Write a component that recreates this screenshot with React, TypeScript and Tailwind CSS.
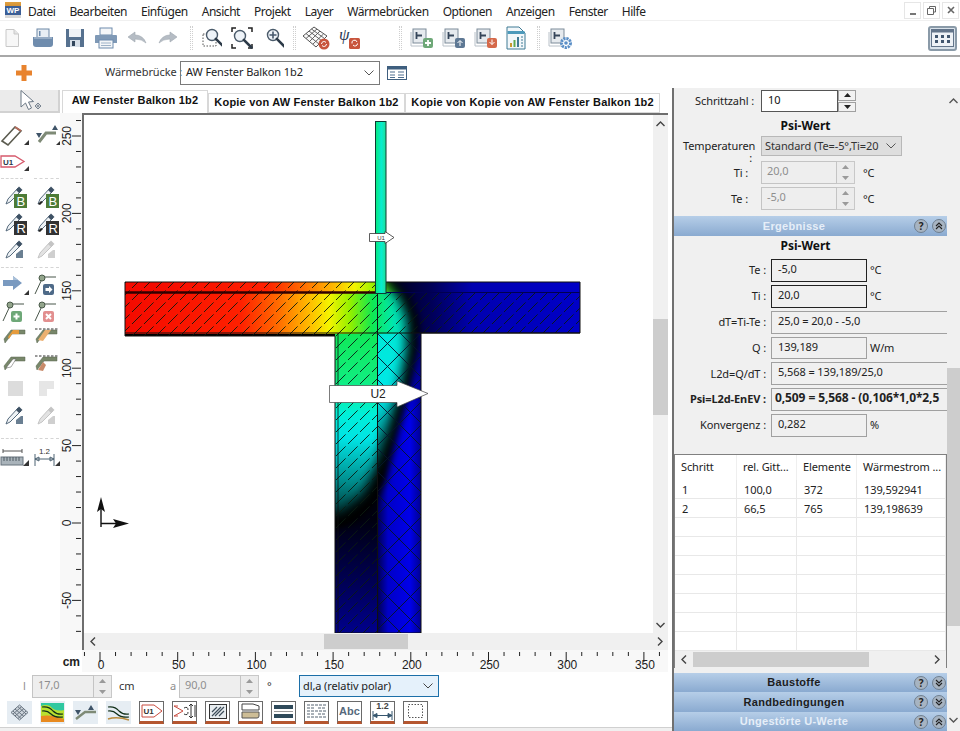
import React from "react";

const SF = "'Liberation Sans', sans-serif";

function Ic({ w = 24, h = 24, vb, className = "", children }: { w?: number; h?: number; vb?: string; className?: string; children?: React.ReactNode }) {
  return (
    <svg width={w} height={h} viewBox={vb ?? `0 0 ${w} ${h}`} className={`shrink-0 block ${className}`}>
      {children}
    </svg>
  );
}

const Corner = () => <path d="M24 23 L29 18 V23 Z" fill="#333" />;

/* ---------- top toolbar ---------- */
const IconNew = () => (
  <Ic w={16} h={20}>
    <path d="M2 1.5 H10 L14.5 6 V18.5 H2 Z" fill="#f7f7f7" stroke="#c8c8c8" />
    <path d="M10 1.5 V6 H14.5" fill="#e4e4e4" stroke="#c8c8c8" />
  </Ic>
);
const IconOpen = () => (
  <Ic w={22} h={20}>
    <rect x="5" y="1" width="12" height="9" fill="#e8eef4" stroke="#6d87a6" />
    <path d="M1 9 H21 V16 Q21 19 18 19 H4 Q1 19 1 16 Z" fill="#6f8cad" />
    <rect x="7" y="3" width="1.5" height="5" fill="#6f8cad" />
    <rect x="2" y="9" width="18" height="2" fill="#95abc4" />
  </Ic>
);
const IconSave = () => (
  <Ic w={20} h={20}>
    <path d="M1 1 H19 V19 H1 Z" fill="#56718f" />
    <rect x="4" y="1" width="12" height="8" fill="#eef2f6" />
    <rect x="5" y="12" width="10" height="7" fill="#d7dfe8" />
    <rect x="7" y="13" width="3" height="5" fill="#33465c" />
  </Ic>
);
const IconPrint = () => (
  <Ic w={24} h={22}>
    <rect x="6" y="1" width="12" height="7" fill="#f4f6f8" stroke="#6f8cad" />
    <path d="M2 8 H22 Q23 8 23 9 V16 H1 V9 Q1 8 2 8 Z" fill="#7f99b6" />
    <rect x="5" y="13" width="14" height="8" fill="#f4f6f8" stroke="#6f8cad" />
    <path d="M7 16 H17 M7 18.5 H17" stroke="#9eb2c7" />
  </Ic>
);
const IconUndo = ({ flip = false }: { flip?: boolean }) => (
  <Ic w={20} h={16} className={flip ? "-scale-x-100" : ""}>
    <path d="M1 7 L8 2 V5 Q16 5 19 13 Q15 9 8 9 V12 Z" fill="#b5bcc4" stroke="#9fa7b0" strokeWidth="0.6" />
  </Ic>
);
const Lens = ({ x = 9, y = 9, r = 6, plus = false }: { x?: number; y?: number; r?: number; plus?: boolean }) => (
  <g>
    <circle cx={x} cy={y} r={r} fill="#eef3f8" stroke="#4a5a6a" strokeWidth="1.4" />
    <path d={`M${x + r * 0.7} ${y + r * 0.7} L${x + r + 6} ${y + r + 6}`} stroke="#2c3a48" strokeWidth="2.6" strokeLinecap="round" />
    {plus && <path d={`M${x - 3.5} ${y} H${x + 3.5} M${x} ${y - 3.5} V${y + 3.5}`} stroke="#46586c" strokeWidth="1.6" />}
  </g>
);
const IconZoom1 = () => (
  <Ic w={20} h={20}>
    <rect x="1" y="6" width="13" height="12" fill="none" stroke="#555" strokeDasharray="1.5 1.5" />
    <Lens x={10} y={7} r={5.5} />
  </Ic>
);
const IconZoom2 = () => (
  <Ic w={22} h={22}>
    <path d="M1 5 V1 H5 M17 1 H21 V5 M1 17 V21 H5 M17 21 H21 V17" fill="none" stroke="#222" strokeWidth="1.5" />
    <Lens x={9} y={9} r={5.5} />
  </Ic>
);
const IconZoom3 = () => (
  <Ic w={18} h={20}>
    <Lens x={7} y={7} r={5.5} plus />
  </Ic>
);
const IconGrid = () => (
  <Ic w={28} h={24}>
    <path d="M1 10 L12 1 L25 10 L14 21 Z" fill="#fafafa" stroke="#555" />
    <path d="M4 7.5 L17 18 M7 5 L20 15 M9.5 3 L22.5 12.5 M4 12.5 L15 3 M7.5 15.5 L18 5 M11 18 L21.5 8" stroke="#555" strokeWidth="0.9" />
    <circle cx="22" cy="18" r="5.5" fill="#c8553d" />
    <path d="M19.5 18 A2.5 2.5 0 0 1 24 16.5 M24.5 18 A2.5 2.5 0 0 1 20 19.5" stroke="#fff" fill="none" />
  </Ic>
);
const IconPsi = () => (
  <Ic w={22} h={26}>
    <text x="0" y="15" fontFamily="'Liberation Serif', serif" fontStyle="italic" fontSize="17" fill="#2b3a55">ψ</text>
    <rect x="10" y="13" width="11" height="11" rx="1.5" fill="#c8553d" />
    <path d="M13 18.5 A2.5 2.5 0 0 1 18 17 M18.5 18.5 A2.5 2.5 0 0 1 14 20" stroke="#fff" fill="none" />
  </Ic>
);
const IconT = ({ kind }: { kind: "add" | "up" | "down" | "gear" }) => (
  <Ic w={24} h={22}>
    <path d="M1 5 V19 H15" fill="none" stroke="#b8c0c8" />
    <rect x="3" y="2" width="13" height="14" fill="#e6eaee" stroke="#7d8b99" />
    <path d="M6.5 5 V12 M6.5 8.5 H12" stroke="#36465a" strokeWidth="1.8" />
    {kind === "add" && (<g><rect x="13" y="11" width="10" height="10" rx="2" fill="#6ea878" /><path d="M15 16 H21 M18 13 V19" stroke="#fff" strokeWidth="1.8" /></g>)}
    {kind === "up" && (<g><rect x="13" y="11" width="10" height="10" rx="2" fill="#5e7894" /><path d="M18 19 V14 M15.5 16 L18 13.5 L20.5 16" stroke="#fff" fill="none" /></g>)}
    {kind === "down" && (<g><rect x="13" y="11" width="10" height="10" rx="2" fill="#d5694a" /><path d="M18 12.5 V17.5 M15.5 15 L18 17.5 L20.5 15" stroke="#fff" fill="none" /></g>)}
    {kind === "gear" && (<g><circle cx="18" cy="16" r="4.5" fill="#fff" stroke="#5b8fc7" strokeWidth="3" strokeDasharray="2.2 0.8" /><circle cx="18" cy="16" r="1.8" fill="#5b8fc7" /></g>)}
  </Ic>
);
const IconSheet = () => (
  <Ic w={20} h={24}>
    <path d="M1 1 H13 L19 7 V23 H1 Z" fill="#f2f7fa" stroke="#3f7a94" />
    <rect x="1.5" y="5" width="17" height="3" fill="#4d9abb" />
    <rect x="4" y="17" width="2" height="4" fill="#c99a2e" />
    <rect x="7.5" y="14" width="2" height="7" fill="#5faa4f" />
    <rect x="11" y="11" width="2" height="10" fill="#3f7a94" />
    <path d="M15 11 H17 M15 14 H17 M15 17 H17 M15 20 H17" stroke="#3f7a94" />
  </Ic>
);
const IconPanels = () => (
  <Ic w={23} h={18}>
    <rect x="0.5" y="0.5" width="22" height="17" fill="#eef2f6" stroke="#63758a" />
    <rect x="0.5" y="0.5" width="22" height="3" fill="#63758a" />
    <path d="M4 6 h3 v3 h-3 z M10 6 h3 v3 h-3 z M16 6 h3 v3 h-3 z M4 11 h3 v3 h-3 z M10 11 h3 v3 h-3 z M16 11 h3 v3 h-3 z" fill="#41566e" />
  </Ic>
);
const Sep = ({ className = "" }: { className?: string }) => (
  <div className={`h-[24px] w-[3px] border-x border-dotted border-[#cfcfcf] ${className}`} />
);

/* ---------- left toolbar ---------- */
const Beam = ({ tri = true }: { tri?: boolean }) => (
  <Ic w={30} h={26} vb="0 0 30 26">
    <path d="M2 19 L15 5 L21 9 L8 23 Z" fill="#fff" stroke="#5b5b4f" strokeWidth="1.6" />
    <path d="M15 5 L21 9" stroke="#b56a5a" strokeWidth="1.8" />
    {tri && <Corner />}
  </Ic>
);
const Angle = () => (
  <Ic w={30} h={26} vb="0 0 30 26">
    <path d="M7 20 L14 11 H24" fill="none" stroke="#7e8a76" strokeWidth="3" />
    <path d="M20 8 L23 3 L26 8 Z M4 11 H10 L7 16 Z" fill="#3f5468" />
    <Corner />
  </Ic>
);
const U1Tag = () => (
  <Ic w={30} h={26} vb="0 0 30 26">
    <path d="M1 8 H15 L24 13.5 L15 19 H1 Z" fill="#fff" stroke="#d65a6c" strokeWidth="1.3" />
    <text x="3" y="16.5" fontFamily={SF} fontWeight="700" fontSize="8" fill="#2b3a4a">U1</text>
    <Corner />
  </Ic>
);
const Pen = ({ letter, bg, dark = false, gray = false }: { letter?: string; bg?: string; dark?: boolean; gray?: boolean }) => (
  <Ic w={24} h={26}>
    <path d="M3 21 L5 16 L15 5 L18 8 L7 19 Z" fill={gray ? "#e2e2e2" : "#eef2f5"} stroke={gray ? "#c4c4c4" : "#566a7c"} strokeWidth="1" />
    <path d="M13 7 L16 3.5 L19.5 7 L16 10 Z" fill={gray ? "#c4c4c4" : "#3e5164"} />
    {dark && <path d="M3 21 L6 18 L8 19 L5 22 Z" fill="#222" />}
    {letter ? (
      <g>
        <rect x="11" y="11" width="13" height="14" fill={bg} />
        <text x="13.5" y="22.5" fontFamily={SF} fontSize="13" fill="#fff">{letter}</text>
      </g>
    ) : (
      <g>
        <path d="M13 17 L18 13 H20 V21 H13 Z" fill={gray ? "#cfcfcf" : "#6a7f92"} />
      </g>
    )}
  </Ic>
);
const ArrowTool = () => (
  <Ic w={30} h={24} vb="0 0 30 24">
    <path d="M3 8 H13 V4 L22 11 L13 18 V14 H3 Z" fill="#7a9ac0" />
    <path d="M3 8 H13 V4 L18 8 Z" fill="#a9c0d9" />
    <Corner />
  </Ic>
);
const Node = ({ bg, kind, tri }: { bg?: string; kind?: "arrow" | "plus" | "x"; tri?: boolean }) => (
  <Ic w={30} h={26} vb="0 0 30 26">
    <path d="M3 23 L10 8 M10 6 H24" stroke="#49564a" strokeWidth="1" fill="none" />
    <circle cx="10" cy="7" r="3" fill="#93a58c" stroke="#4a5a4a" />
    <rect x="11" y="13" width="11" height="11" rx="2" fill={bg} />
    {kind === "plus" && <path d="M13.5 18.5 H19.5 M16.5 15.5 V21.5" stroke="#fff" strokeWidth="2" />}
    {kind === "x" && <path d="M14 16 L19 21 M19 16 L14 21" stroke="#fff" strokeWidth="2" />}
    {kind === "arrow" && <path d="M13.5 17 H17 V15 L20.5 18.5 L17 22 V20 H13.5 Z" fill="#fff" />}
    {tri && <Corner />}
  </Ic>
);
const Corner2 = ({ kind }: { kind: 0 | 1 | 2 | 3 }) => (
  <Ic w={26} h={20}>
    {(kind === 1 || kind === 3) && <path d="M1 3 H25" stroke="#333" strokeDasharray="2.5 1.5" />}
    <path d="M3 17 L10 8 H23 V4 H9 L2 13 Z" fill="#78876a" stroke="#596650" strokeWidth="0.5" />
    {kind === 0 && <path d="M6 11 L11 4 H17 V8 H10 L7 13 Z" fill="#e59b3d" />}
    {kind === 1 && <path d="M4 14 L11 4 H17 L9 15 Z" fill="#ecb070" />}
    {kind === 2 && <path d="M4 15 L11 6 H14 L9 14 Z" fill="#fff" stroke="#555" strokeWidth="0.5" />}
    {kind === 3 && <path d="M4 17 L9 9 L12 12 L9 18 Z" fill="#c88a6a" />}
  </Ic>
);
const Ruler = () => (
  <Ic w={30} h={24} vb="0 0 30 24">
    <path d="M3 5 H22 M3 3 V7 M22 3 V7" stroke="#555" fill="none" />
    <rect x="1" y="11" width="22" height="8" fill="#a9b3ba" stroke="#66727c" />
    <path d="M4 11 V15 M7 11 V15 M10 11 V15 M13 11 V15 M16 11 V15 M19 11 V15" stroke="#4f5a63" />
    <path d="M23 20 L29 14 V20 Z" fill="#333" />
  </Ic>
);
const Dim = () => (
  <Ic w={30} h={24} vb="0 0 30 24">
    <text x="7" y="8" fontFamily={SF} fontSize="8" fill="#333">1.2</text>
    <path d="M3 8 V20 M22 8 V20 M3 13 H22 M3 13 L7 11 V15 Z M22 13 L18 11 V15 Z" stroke="#4d6272" fill="none" />
    <path d="M23 20 L29 14 V20 Z" fill="#333" />
  </Ic>
);

function Row({ h, children }: { h: string; children: React.ReactNode }) {
  return <div className={`flex items-center ${h}`}>{children}</div>;
}
const C1 = ({ children }: { children?: React.ReactNode }) => <div className="flex w-[30px] justify-center">{children}</div>;
const C2 = ({ children }: { children?: React.ReactNode }) => <div className="ml-[3px] flex w-[27px] justify-center">{children}</div>;
const HSep = () => (
  <div className="flex h-full items-center gap-[7px] px-[1px]">
    <div className="w-[22px] border-t border-dashed border-[#d5d5d5]" />
    <div className="ml-[4px] w-[26px] border-t border-dashed border-[#d5d5d5]" />
  </div>
);

function LeftBar() {
  return (
    <div className="flex w-[60px] shrink-0 flex-col">
      <div className="mt-[2px] flex h-[23px] items-center justify-center border-b-2 border-r-2 border-[#d2d2d2] bg-[#ebebeb]">
        <Ic w={22} h={21} vb="0 0 22 21" className="ml-[4px]">
          <path d="M1 0.5 V17 L5.5 13 L8.5 19.5 L11.5 18 L8.5 12 L13.5 11.5 Z" fill="#fff" stroke="#6b7885" />
          <path d="M18 13 L21 16 L18 19 L15 16 Z M18 14.5 V17.5 M16.5 16 H19.5" fill="none" stroke="#5a6a78" strokeWidth="0.8" />
        </Ic>
      </div>
      <div className="h-[9px]" />
      <Row h="h-[26px]"><C1><Beam /></C1><C2><Angle /></C2></Row>
      <Row h="h-[26px]"><C1><U1Tag /></C1><C2 /></Row>
      <div className="h-[9px]"><HSep /></div>
      <Row h="h-[26px]"><C1><Pen letter="B" bg="#4d7c37" /></C1><C2><Pen letter="B" bg="#4d7c37" dark /></C2></Row>
      <Row h="h-[28px]"><C1><Pen letter="R" bg="#333" /></C1><C2><Pen letter="R" bg="#333" dark /></C2></Row>
      <Row h="h-[26px]"><C1><Pen /></C1><C2><Pen gray /></C2></Row>
      <div className="h-[8px]"><HSep /></div>
      <Row h="h-[26px]"><C1><ArrowTool /></C1><C2><Node bg="#4e6a88" kind="arrow" /></C2></Row>
      <Row h="h-[28px]"><C1><Node bg="#6ea878" kind="plus" /></C1><C2><Node bg="#e28f8f" kind="x" /></C2></Row>
      <Row h="h-[22px]"><C1><Corner2 kind={0} /></C1><C2><Corner2 kind={1} /></C2></Row>
      <Row h="h-[32px]"><C1><Corner2 kind={2} /></C1><C2><Corner2 kind={3} /></C2></Row>
      <Row h="h-[18px]">
        <C1><div className="h-[15px] w-[15px] bg-[#dcdcdc]" /></C1>
        <C2><Ic w={15} h={15}><path d="M0 0 H15 V8 H8 V15 H0 Z" fill="#e6e6e6" /></Ic></C2>
      </Row>
      <Row h="h-[38px]"><C1><Pen /></C1><C2><Pen gray /></C2></Row>
      <div className="h-[6px]"><HSep /></div>
      <Row h="h-[34px]"><C1><Ruler /></C1><C2><Dim /></C2></Row>
    </div>
  );
}

/* ---------- rulers ---------- */
function VRuler() {
  const scale = 77.4 / 50;
  const y = (v: number) => 410 - v * scale;
  const ticks: number[] = [];
  for (let v = -70; v <= 260; v += 10) ticks.push(v);
  return (
    <div className="w-[22px] shrink-0 bg-[#f8f8f8]">
      <svg width="22" height="537" className="block">
        {ticks.map((v) => (
          <path key={v} d={`M${v % 50 === 0 ? 12 : 16} ${y(v)} H21`} stroke="#222" strokeWidth="1" />
        ))}
        {[-50, 0, 50, 100, 150, 200, 250].map((v) => (
          <text key={v} transform={`translate(11 ${y(v)}) rotate(-90)`} textAnchor="middle" fontFamily={SF} fontSize="12" fill="#222">
            {v}
          </text>
        ))}
      </svg>
    </div>
  );
}
function HRuler() {
  const x = (v: number) => 18 + v * (77.7 / 50);
  const ticks: number[] = [];
  for (let v = -10; v <= 370; v += 10) ticks.push(v);
  return (
    <div className="flex h-[22px] w-[612px]">
      <div className="w-[22px] shrink-0 pt-[5px] text-right text-[12px] font-bold leading-[14px] tracking-normal text-[#222] font-['Liberation_Sans',sans-serif] pr-[2px]">cm</div>
      <svg width="586" height="22" className="block bg-[#f8f8f8]">
        {ticks.map((v) => (
          <path key={v} d={`M${x(v)} 2 V${v % 50 === 0 ? 12 : 6}`} stroke="#222" />
        ))}
        {[0, 50, 100, 150, 200, 250, 300, 350].map((v) => (
          <text key={v} x={x(v) + 1} y="19" textAnchor="middle" fontFamily={SF} fontSize="12" fill="#222">
            {v}
          </text>
        ))}
      </svg>
    </div>
  );
}

/* ---------- drawing ---------- */
function Scene() {
  const P1 = "100,262 382,262 392,281 409,296 418,318 420,345 412,385 399,430 386,480 372,508 352,524 335,530 100,530";
  const P2 = "100,262 374,262 384,282 398,298 406,320 406,350 399,385 388,425 376,465 362,495 340,514 100,516";
  return (
    <svg width="569" height="518" viewBox="84 115 569 518" className="block bg-white">
      <defs>
        <clipPath id="body"><path d="M125 282 H580 V333 H421 V633 H335 V336 H125 Z" /></clipPath>
        <clipPath id="hatchA"><path d="M125 292 H580 V333 H377 V633 H335 V336 H125 Z M125 282 H375 V292 H125 Z" /></clipPath>
        <filter id="b3" x="-20%" y="-20%" width="140%" height="140%"><feGaussianBlur stdDeviation="3.5" /></filter>
        <filter id="b6" x="-20%" y="-20%" width="140%" height="140%"><feGaussianBlur stdDeviation="6" /></filter>
        <mask id="colorMask" maskUnits="userSpaceOnUse" x="84" y="115" width="569" height="518">
          <polygon points={P2} fill="#fff" filter="url(#b6)" />
        </mask>
        <linearGradient id="slab" gradientUnits="userSpaceOnUse" x1="125" x2="430" y1="0" y2="0">
          <stop offset="0" stopColor="#f40a00" />
          <stop offset="0.38" stopColor="#ff2000" />
          <stop offset="0.5" stopColor="#ff6a00" />
          <stop offset="0.6" stopColor="#ffb800" />
          <stop offset="0.67" stopColor="#f4f400" />
          <stop offset="0.74" stopColor="#90f000" />
          <stop offset="0.81" stopColor="#10e850" />
          <stop offset="0.88" stopColor="#00e8b0" />
          <stop offset="0.95" stopColor="#00f0f0" />
          <stop offset="1" stopColor="#00f0f0" />
        </linearGradient>
        <linearGradient id="slabTop" gradientUnits="userSpaceOnUse" x1="150" x2="455" y1="0" y2="0">
          <stop offset="0" stopColor="#f40a00" />
          <stop offset="0.38" stopColor="#ff2000" />
          <stop offset="0.5" stopColor="#ff6a00" />
          <stop offset="0.6" stopColor="#ffb800" />
          <stop offset="0.67" stopColor="#f4f400" />
          <stop offset="0.74" stopColor="#90f000" />
          <stop offset="0.81" stopColor="#10e850" />
          <stop offset="1" stopColor="#00f0f0" />
        </linearGradient>
        <linearGradient id="slabBlue" gradientUnits="userSpaceOnUse" x1="395" x2="580" y1="0" y2="0">
          <stop offset="0" stopColor="#000020" />
          <stop offset="0.2" stopColor="#000058" />
          <stop offset="0.42" stopColor="#0000b0" />
          <stop offset="1" stopColor="#0000c8" />
        </linearGradient>
        <linearGradient id="wallL" gradientUnits="userSpaceOnUse" x1="0" x2="0" y1="333" y2="525">
          <stop offset="0" stopColor="#10e858" />
          <stop offset="0.25" stopColor="#10ee80" />
          <stop offset="0.42" stopColor="#00f0d8" />
          <stop offset="0.55" stopColor="#00e4e4" />
          <stop offset="0.78" stopColor="#008a8a" />
          <stop offset="1" stopColor="#001818" />
        </linearGradient>
        <linearGradient id="wallR" gradientUnits="userSpaceOnUse" x1="0" x2="0" y1="333" y2="490">
          <stop offset="0" stopColor="#00e8d8" />
          <stop offset="0.4" stopColor="#00e8e8" />
          <stop offset="0.75" stopColor="#007c7c" />
          <stop offset="1" stopColor="#001010" />
        </linearGradient>
        <linearGradient id="lowerL" gradientUnits="userSpaceOnUse" x1="0" x2="0" y1="520" y2="633">
          <stop offset="0" stopColor="#000010" />
          <stop offset="1" stopColor="#00008c" />
        </linearGradient>
        <linearGradient id="rightB" gradientUnits="userSpaceOnUse" x1="377" x2="421" y1="0" y2="0">
          <stop offset="0" stopColor="#00004a" />
          <stop offset="0.25" stopColor="#0000c8" />
          <stop offset="0.75" stopColor="#0000ea" />
          <stop offset="1" stopColor="#000090" />
        </linearGradient>
        <linearGradient id="win" x1="0" x2="1" y1="0" y2="0">
          <stop offset="0" stopColor="#06e878" />
          <stop offset="0.55" stopColor="#06ecd0" />
          <stop offset="1" stopColor="#20e098" />
        </linearGradient>
        <pattern id="diag" patternUnits="userSpaceOnUse" width="12" height="12">
          <path d="M-1 13 L13 -1" stroke="#0a1a10" strokeWidth="0.9" strokeDasharray="15 4.8" />
        </pattern>
        <pattern id="cross" patternUnits="userSpaceOnUse" width="23" height="23" x="8" y="10">
          <path d="M0 23 L23 0 M0 0 L23 23" stroke="#06142a" strokeWidth="0.9" />
        </pattern>
      </defs>

      <g clipPath="url(#body)">
        <rect x="84" y="280" width="569" height="60" fill="url(#slabBlue)" />
        <rect x="335" y="333" width="42" height="300" fill="url(#lowerL)" />
        <rect x="377" y="333" width="44" height="300" fill="url(#rightB)" />
        <polygon points={P1} fill="#000" filter="url(#b3)" />
        <g mask="url(#colorMask)">
          <rect x="335" y="333" width="42" height="200" fill="url(#wallL)" />
          <rect x="377" y="333" width="50" height="200" fill="url(#wallR)" />
          <rect x="125" y="292" width="310" height="42" fill="url(#slab)" />
          <rect x="125" y="280" width="310" height="12" fill="url(#slabTop)" />
        </g>
        <rect x="84" y="280" width="569" height="360" fill="url(#diag)" clipPath="url(#hatchA)" />
        <rect x="377" y="333" width="44" height="300" fill="url(#cross)" />
      </g>

      <g fill="none" stroke="#101010" strokeWidth="1">
        <path d="M125 282 H580 V333 H421 V633 H335 V336 H125 Z" />
        <path d="M125 333 H580" />
        <path d="M125 292.5 H375" stroke="#300000" strokeWidth="2.4" />
        <path d="M386 292.5 H580" stroke="#000050" strokeWidth="1.2" />
        <path d="M377.5 293 V633" />
        <path d="M338 333 V633" strokeWidth="0.8" />
      </g>

      <rect x="375.5" y="121.5" width="10.5" height="172" fill="url(#win)" stroke="#0c3a32" />
      <path d="M369.5 233.5 H385 V231.5 L394 237.5 L385 243.5 V241.5 H369.5 Z" fill="#fff" stroke="#333" strokeWidth="0.8" />
      <text x="381" y="240" fontFamily={SF} fontSize="6" fill="#333" textAnchor="middle">U1</text>

      <path d="M329.5 385.5 H397 V381 L428 393.5 L397 407 V402.5 H329.5 Z" fill="#fff" stroke="#444" strokeWidth="0.7" />
      <text x="378" y="398" fontFamily={SF} fontSize="12" fill="#222" textAnchor="middle">U2</text>

      <path d="M101 527 V505 M101 523.5 H118" stroke="#111" strokeWidth="1.4" fill="none" />
      <path d="M101 497 L97 512 L101 509 L105 512 Z M129 523.5 L113 519 L116 523.5 L113 528 Z" fill="#111" />
    </svg>
  );
}

/* ---------- controls ---------- */
const UpDown = ({ on = false, h = "h-[23px]" }: { on?: boolean; h?: string }) => {
  const c = on ? "#222" : "#9a9a9a";
  return (
    <div className={`flex w-[18px] shrink-0 flex-col gap-[1px] ${h} ${on ? "" : "border border-l-0 border-[#c8c8c8] bg-[#ececec]"}`}>
      {[0, 1].map((i) => (
        <div key={i} className={`flex flex-1 items-center justify-center ${on ? "border border-[#a0a0a0] bg-[#f2f2f2]" : ""}`}>
          <svg width="7" height="4">
            <path d={i === 0 ? "M0 4 L3.5 0 L7 4 Z" : "M0 0 L3.5 4 L7 0 Z"} fill={c} />
          </svg>
        </div>
      ))}
    </div>
  );
};
const Disabled = ({ v, w }: { v: string; w: string }) => (
  <div className={`flex h-[23px] ${w}`}>
    <div className="flex-1 border border-[#c4c4c4] bg-[#eeeeee] pl-[5px] leading-[18px] text-[#8e8e8e]">{v}</div>
    <UpDown />
  </div>
);
const Chevron = ({ c = "#555" }: { c?: string }) => (
  <svg width="10" height="6" className="shrink-0">
    <path d="M0.5 0.5 L5 5 L9.5 0.5" fill="none" stroke={c} />
  </svg>
);
const Help = () => (
  <div className="flex h-[14px] w-[14px] items-center justify-center rounded-full border border-[#6f7f90] bg-[#a7b4c2] text-[10px] font-bold leading-none text-[#222]">?</div>
);
const Fold = ({ up }: { up: boolean }) => (
  <div className="flex h-[14px] w-[14px] items-center justify-center rounded-full border border-[#6f7f90] bg-[#a7b4c2]">
    <svg width="8" height="8">
      <path d={up ? "M1 4 L4 1 L7 4 M1 7 L4 4 L7 7" : "M1 1 L4 4 L7 1 M1 4 L4 7 L7 4"} fill="none" stroke="#222" strokeWidth="1.1" />
    </svg>
  </div>
);
function Accord({ title, up, light, h = "h-[20px]" }: { title: string; up: boolean; light?: boolean; h?: string }) {
  return (
    <div className={`flex shrink-0 items-center bg-gradient-to-b from-[#b6cee8] to-[#8aaad0] ${h}`}>
      <div className={`min-w-0 flex-1 text-center text-[11px] font-bold tracking-[0.3px] font-['Liberation_Sans',sans-serif] ${light ? "text-[#e6eef8]" : "text-[#1d1d1d]"}`}>{title}</div>
      <div className="flex w-[33px] shrink-0 gap-[4px]">
        <Help />
        <Fold up={up} />
      </div>
    </div>
  );
}
function ResultRow({ label, val, unit, bold, strong, wide, mt = "mt-[3px]" }: { label: string; val: string; unit?: string; bold?: boolean; strong?: boolean; wide?: boolean; mt?: string }) {
  return (
    <div className={`flex h-[23px] items-stretch ${mt}`}>
      <div className={`flex w-[97px] shrink-0 items-center justify-end pr-[5px] ${bold ? "font-bold" : ""} text-[#222]`}>{label}</div>
      <div className={`overflow-hidden whitespace-nowrap bg-[#f0f0f0] leading-[18px] text-[#222] ${wide ? "flex-1 border border-r-0 border-[#a0a0a0]" : "w-[96px] border"} ${wide ? "" : strong ? "border-[#222]" : "border-[#a0a0a0]"} ${bold ? "pl-[3px] text-[12px] font-bold" : "pl-[6px]"}`}>
        {val}
      </div>
      {unit && <div className="flex items-center pl-[3px] text-[#222]">{unit}</div>}
    </div>
  );
}

const tableRows = [
  ["1", "100,0", "372", "139,592941"],
  ["2", "66,5", "765", "139,198639"],
  ["", "", "", ""],
  ["", "", "", ""],
  ["", "", "", ""],
  ["", "", "", ""],
  ["", "", "", ""],
  ["", "", "", ""],
  ["", "", "", ""],
];
const colW = ["w-[62px]", "w-[60px]", "w-[60px]", "flex-1"];

function RightPanel() {
  return (
    <div className="flex min-w-0 flex-1 bg-[#f0f0f0]">
      <div className="flex min-w-0 flex-1 flex-col">
        <div className="mt-[2px] flex h-[22px] items-center">
          <div className="w-[80px] shrink-0 text-right text-[#222]">Schrittzahl :</div>
          <div className="ml-[7px] flex h-[22px]">
            <div className="w-[77px] border border-[#555] bg-white pl-[6px] leading-[18px] text-[#111]">10</div>
            <UpDown on h="h-[22px]" />
          </div>
        </div>
        <div className="mt-[5px] h-[18px] pr-[10px] text-center text-[12px] font-bold leading-[18px] tracking-normal text-[#111]">Psi-Wert</div>
        <div className="mt-[1px] flex h-[20px]">
          <div className="w-[78px] shrink-0 pl-[9px] pt-[4px] text-right leading-[12px] text-[#222]">Temperaturen :</div>
          <div className="ml-[9px] flex w-[141px] items-center border border-[#b8b8b8] bg-[#dedede] pl-[3px] pr-[5px] text-[#333]">
            <span className="flex-1 overflow-hidden whitespace-nowrap">Standard (Te=-5°,Ti=20</span>
            <Chevron />
          </div>
        </div>
        <div className="mt-[5px] flex h-[23px] items-stretch">
          <div className="w-[74px] shrink-0 text-right leading-[23px] text-[#222]">Ti :</div>
          <div className="ml-[13px]"><Disabled v="20,0" w="w-[94px]" /></div>
          <div className="ml-[8px] leading-[23px] text-[#222]">°C</div>
        </div>
        <div className="mt-[3px] flex h-[23px] items-stretch">
          <div className="w-[74px] shrink-0 text-right leading-[23px] text-[#222]">Te :</div>
          <div className="ml-[13px]"><Disabled v="-5,0" w="w-[94px]" /></div>
          <div className="ml-[8px] leading-[23px] text-[#222]">°C</div>
        </div>
        <div className="mt-[6px]"><Accord title="Ergebnisse" up light h="h-[20px]" /></div>
        <div className="mt-[1px] h-[20px] pr-[10px] text-center text-[12px] font-bold leading-[18px] tracking-normal text-[#111]">Psi-Wert</div>
        <ResultRow label="Te :" val="-5,0" unit="°C" strong mt="mt-[2px]" />
        <ResultRow label="Ti :" val="20,0" unit="°C" strong mt="mt-[3px]" />
        <ResultRow label="dT=Ti-Te :" val="25,0 = 20,0 - -5,0" wide />
        <ResultRow label="Q :" val="139,189" unit="W/m" />
        <ResultRow label="L2d=Q/dT :" val="5,568 = 139,189/25,0" wide />
        <ResultRow label="Psi=L2d-EnEV :" val="0,509 = 5,568 - (0,106*1,0*2,5" wide bold />
        <ResultRow label="Konvergenz :" val="0,282" unit="%" />

        <div className="mt-[17px] flex h-[214px] shrink-0 flex-col border border-[#808080] bg-white">
          <div className="flex h-[25px] shrink-0 text-[#222]">
            {["Schritt", "rel. Gitt...", "Elemente", "Wärmestrom ..."].map((t, i) => (
              <div key={t} className={`flex items-center whitespace-nowrap border-r border-[#efefef] pl-[6px] ${colW[i]}`}>{t}</div>
            ))}
          </div>
          {tableRows.map((r, i) => (
            <div key={i} className="flex h-[19px] shrink-0 border-b border-[#e8e8e8] leading-[20px] text-[#222]">
              {r.map((c, j) => (
                <div key={j} className={`border-r border-[#e8e8e8] pl-[7px] ${colW[j]}`}>{c}</div>
              ))}
            </div>
          ))}
          <div className="mt-auto flex h-[17px] shrink-0 items-center bg-[#f0f0f0]">
            <div className="flex w-[18px] justify-center"><svg width="6" height="9"><path d="M5 0.5 L1 4.5 L5 8.5" fill="none" stroke="#444" strokeWidth="1.4" /></svg></div>
            <div className="h-[15px] w-[176px] bg-[#cdcdcd]" />
            <div className="flex-1" />
            <div className="flex w-[18px] justify-center"><svg width="6" height="9"><path d="M1 0.5 L5 4.5 L1 8.5" fill="none" stroke="#444" strokeWidth="1.4" /></svg></div>
          </div>
        </div>
        <div className="mt-[5px]"><Accord title="Baustoffe" up={false} h="h-[19px]" /></div>
        <Accord title="Randbedingungen" up={false} h="h-[20px]" />
        <Accord title="Ungestörte U-Werte" up light h="h-[19px]" />
      </div>
      <div className="flex w-[13px] shrink-0 flex-col">
        <div className="flex h-[21px] items-center justify-center pt-[4px]"><svg width="9" height="6"><path d="M0.5 5 L4.5 1 L8.5 5" fill="none" stroke="#555" strokeWidth="1.4" /></svg></div>
        <div className="mt-[259px] h-[258px] bg-[#cdcdcd]" />
        <div className="mt-auto flex h-[20px] items-center justify-center pb-[3px]"><svg width="9" height="6"><path d="M0.5 1 L4.5 5 L8.5 1" fill="none" stroke="#555" strokeWidth="1.4" /></svg></div>
      </div>
    </div>
  );
}

/* ---------- bottom tool strip ---------- */
const Tool = ({ orange, children }: { orange?: boolean; children: React.ReactNode }) => (
  <div className={`flex h-[23px] w-[25px] items-center justify-center ${orange ? "border border-b-[3px] border-[#6a6a6a] border-b-[#b5562f] bg-white" : "bg-[#e6edf3]"}`}>
    {children}
  </div>
);
const Contours = ({ fill }: { fill: boolean }) => (
  <svg width="23" height="19" className="block">
    {fill && (
      <g>
        <rect width="23" height="19" fill="#b8e030" />
        <path d="M0 0 H23 V7 Q14 9 9 3 Q5 1 0 3 Z" fill="#30c8a0" />
        <path d="M0 13 Q10 11 23 16 V19 H0 Z" fill="#e88a20" />
      </g>
    )}
    <path d="M1 4 Q8 3 12 8 Q16 12 22 11 M1 8 Q6 7 10 11 Q14 15 22 14" stroke="#12301a" fill="none" strokeWidth="1.2" />
    {!fill && <path d="M1 16 Q10 13 22 17" stroke="#b98b3d" fill="none" strokeWidth="1.6" />}
  </svg>
);

function Strip() {
  return (
    <div className="flex h-[24px] items-center gap-[8px] pl-[7px]">
      <Tool>
        <svg width="19" height="17"><path d="M1 8.5 L9.5 1 L18 8.5 L9.5 16 Z" fill="#cfd6dd" stroke="#6a7682" /><path d="M5 5 L14 12.5 M8 2.8 L16 10 M3 7 L11 14.5 M5 12 L14 4.5 M3 10 L11.5 2.8 M8 14.5 L16 7" stroke="#6a7682" /></svg>
      </Tool>
      <Tool><Contours fill /></Tool>
      <Tool>
        <svg width="23" height="15"><path d="M2 14 L11 7 H22" stroke="#7e8a76" strokeWidth="2.4" fill="none" /><path d="M14 5 L17 0 L20 5 Z M1 5 H7 L4 10 Z" fill="#3f5468" /></svg>
      </Tool>
      <Tool><Contours fill={false} /></Tool>
      <Tool orange>
        <svg width="22" height="14"><path d="M1 1 H13 L21 7 L13 13 H1 Z" fill="#fff" stroke="#c84a3e" /><text x="2.5" y="10" fontFamily={SF} fontWeight="700" fontSize="8" fill="#333">U1</text></svg>
      </Tool>
      <Tool orange>
        <svg width="23" height="16"><path d="M1 3 L10 8 L1 13 M1 3 H5 M1 13 H5" stroke="#c84a3e" fill="none" /><path d="M18 1 V15 M16 3 L18 1 L20 3 M16 13 L18 15 L20 13 M22 2 V14" stroke="#333" fill="none" /><path d="M11 5 Q15 3 15 7 M11 11 Q15 13 15 9" stroke="#333" fill="none" /></svg>
      </Tool>
      <Tool orange>
        <svg width="18" height="15"><rect x="0.5" y="0.5" width="17" height="14" fill="#e8edf0" stroke="#333" /><path d="M3 12 L12 3 M6 12 L15 3 M3 8 L8 3 M10 12 L15 7" stroke="#3d4d5a" strokeWidth="1.2" /></svg>
      </Tool>
      <Tool orange>
        <svg width="19" height="16"><path d="M1 1 H12 L18 3 V7 H1 Z" fill="#fff" stroke="#444" /><path d="M1 9 H18 V13 Q18 15 16 15 H1 Z" fill="#cdbd96" stroke="#555" /></svg>
      </Tool>
      <Tool orange>
        <svg width="19" height="15"><rect x="0" y="1" width="19" height="4" fill="#2f4a5a" /><rect x="0" y="10" width="19" height="4" fill="#2f4a5a" /><path d="M0 7.5 H19" stroke="#999" /></svg>
      </Tool>
      <Tool orange>
        <svg width="19" height="15"><path d="M0 1 H19 M0 4 H8 M11 4 H19 M0 7 H19 M0 10 H8 M11 10 H19 M0 13 H19" stroke="#556270" strokeDasharray="3 1" /></svg>
      </Tool>
      <Tool orange><span className="text-[11px] font-bold leading-none tracking-normal text-[#56697c] font-['Liberation_Sans',sans-serif]">Abc</span></Tool>
      <Tool orange>
        <div className="flex w-[21px] flex-col items-center leading-none">
          <span className="text-[9px] font-bold leading-[9px] tracking-normal text-[#444] font-['Liberation_Sans',sans-serif]">1.2</span>
          <svg width="21" height="9"><path d="M1 0 V9 M20 0 V9 M1 4.5 H20 M1 4.5 L5 2.5 V6.5 Z M20 4.5 L16 2.5 V6.5 Z" stroke="#36566e" fill="#36566e" /></svg>
        </div>
      </Tool>
      <Tool orange>
        <svg width="15" height="14"><rect x="0.5" y="0.5" width="14" height="13" fill="none" stroke="#555" strokeDasharray="1.5 1.5" /></svg>
      </Tool>
    </div>
  );
}

const menu = ["Datei", "Bearbeiten", "Einfügen", "Ansicht", "Projekt", "Layer", "Wärmebrücken", "Optionen", "Anzeigen", "Fenster", "Hilfe"];
const tabs = [
  { t: "AW Fenster Balkon 1b2", w: "w-[146px]", on: true },
  { t: "Kopie von AW Fenster Balkon 1b2", w: "w-[197px]", on: false },
  { t: "Kopie von Kopie von AW Fenster Balkon 1b2", w: "w-[255px]", on: false },
];

export default function App() {
  return (
    <div className="flex h-[731px] w-[960px] flex-col overflow-hidden bg-white text-[11px] tracking-[-0.1px] font-['Noto_Sans',sans-serif]">
      {/* menu */}
      <div className="flex h-[21px] shrink-0 items-center border-b border-[#f0f0f0]">
        <div className="ml-[5px] flex h-[16px] w-[16px] flex-col justify-end bg-gradient-to-b from-[#e0a040] to-[#b06a20]">
          <div className="bg-[#3b5e96] text-center text-[8px] font-bold leading-[9px] tracking-normal text-white font-['Liberation_Sans',sans-serif]">WP</div>
          <div className="h-[3px] bg-[#d8d8d8]" />
        </div>
        <div className="ml-[7px] flex gap-[14px] pt-[4px] text-[12px] tracking-[-0.45px] text-[#222]">
          {menu.map((m) => (<span key={m}>{m}</span>))}
        </div>
        <div className="ml-auto flex gap-[2px] pr-[1px]">
          <div className="flex h-[17px] w-[17px] items-end justify-center border border-[#e6e6e6] pb-[3px]"><div className="h-[2px] w-[6px] bg-[#777]" /></div>
          <div className="flex h-[17px] w-[17px] items-center justify-center border border-[#e6e6e6]"><svg width="9" height="9"><path d="M2.5 2.5 V0.5 H8.5 V6 H6.5 M0.5 2.5 H6.5 V8.5 H0.5 Z" fill="none" stroke="#666" /></svg></div>
          <div className="flex h-[17px] w-[17px] items-center justify-center border border-[#e6e6e6]"><svg width="8" height="8"><path d="M1 1 L7 7 M7 1 L1 7" stroke="#666" strokeWidth="1.6" /></svg></div>
        </div>
      </div>
      {/* toolbar 1 */}
      <div className="flex h-[36px] shrink-0 items-center border-b-2 border-[#a8a8a8] pl-[4px]">
        <IconNew />
        <div className="ml-[12px]"><IconOpen /></div>
        <div className="ml-[11px]"><IconSave /></div>
        <div className="ml-[9px]"><IconPrint /></div>
        <div className="ml-[9px]"><IconUndo /></div>
        <div className="ml-[11px]"><IconUndo flip /></div>
        <Sep className="ml-[12px]" />
        <div className="ml-[9px]"><IconZoom1 /></div>
        <div className="ml-[9px]"><IconZoom2 /></div>
        <div className="ml-[13px]"><IconZoom3 /></div>
        <Sep className="ml-[9px]" />
        <div className="ml-[6px]"><IconGrid /></div>
        <div className="ml-[9px]"><IconPsi /></div>
        <Sep className="ml-[38px]" />
        <div className="ml-[8px]"><IconT kind="add" /></div>
        <div className="ml-[8px]"><IconT kind="up" /></div>
        <div className="ml-[8px]"><IconT kind="down" /></div>
        <div className="ml-[8px]"><IconSheet /></div>
        <Sep className="ml-[11px]" />
        <div className="ml-[8px]"><IconT kind="gear" /></div>
        <div className="ml-auto mr-[3px] flex h-[25px] w-[29px] items-center justify-center rounded-[3px] border-2 border-[#8a9aa8] bg-[#d9e2ea]">
          <IconPanels />
        </div>
      </div>
      {/* toolbar 2 */}
      <div className="flex h-[31px] shrink-0 items-center">
        <svg width="16" height="16" className="ml-[16px] block"><path d="M5.5 0 H10.5 V5.5 H16 V10.5 H10.5 V16 H5.5 V10.5 H0 V5.5 H5.5 Z" fill="#e8832e" /></svg>
        <span className="ml-[73px] w-[72px] whitespace-nowrap text-[#333]">Wärmebrücke :</span>
        <div className="ml-[3px] flex h-[24px] w-[200px] items-center border border-[#7a7a7a] pl-[5px] pr-[5px] text-[#222]">
          <span className="flex-1">AW Fenster Balkon 1b2</span>
          <Chevron />
        </div>
        <svg width="20" height="14" className="ml-[7px] block">
          <rect x="0.5" y="0.5" width="19" height="13" fill="#fff" stroke="#3f5f7f" />
          <rect x="0.5" y="0.5" width="19" height="3" fill="#3f5f7f" />
          <path d="M3 6 H8 M11 6 H17 M3 9 H8 M11 9 H17 M3 11.5 H8 M11 11.5 H17" stroke="#4f6f8f" />
        </svg>
      </div>
      {/* main */}
      <div className="flex min-h-0 flex-1">
        <div className="flex w-[672px] shrink-0 flex-col">
          <div className="flex h-[584px] shrink-0">
            <LeftBar />
            <div className="flex w-[612px] flex-col">
              <div className="flex h-[25px] shrink-0 items-end pl-[2px]">
                {tabs.map((t) => (
                  <div key={t.t} className={`flex items-center justify-center whitespace-nowrap border border-[#d8d8d8] text-[11px] font-bold tracking-[0.2px] text-[#111] font-['Liberation_Sans',sans-serif] ${t.w} ${t.on ? "h-[23px] border-b-0 pb-[4px]" : "h-[20px] pb-[1px]"}`}>
                    {t.t}
                  </div>
                ))}
              </div>
              <div className="flex h-[537px] shrink-0">
                <VRuler />
                <div className="flex w-[586px] shrink-0 flex-col border-l-2 border-t-2 border-[#6e6e6e]">
                  <div className="flex h-[518px] shrink-0">
                    <div className="w-[569px] shrink-0 overflow-hidden">
                      <Scene />
                    </div>
                    <div className="flex w-[15px] shrink-0 flex-col bg-[#f0f0f0]">
                      <div className="flex h-[17px] items-center justify-center"><svg width="9" height="6"><path d="M0.5 5 L4.5 1 L8.5 5" fill="none" stroke="#444" strokeWidth="1.4" /></svg></div>
                      <div className="mt-[187px] h-[96px] bg-[#cdcdcd]" />
                      <div className="mt-auto flex h-[17px] items-center justify-center"><svg width="9" height="6"><path d="M0.5 1 L4.5 5 L8.5 1" fill="none" stroke="#444" strokeWidth="1.4" /></svg></div>
                    </div>
                  </div>
                  <div className="flex h-[17px] shrink-0 items-center bg-[#f0f0f0]">
                    <div className="flex w-[17px] justify-center"><svg width="6" height="9"><path d="M5 0.5 L1 4.5 L5 8.5" fill="none" stroke="#444" strokeWidth="1.4" /></svg></div>
                    <div className="ml-[223px] h-[15px] w-[84px] bg-[#cdcdcd]" />
                    <div className="ml-auto flex w-[17px] justify-center"><svg width="6" height="9"><path d="M1 0.5 L5 4.5 L1 8.5" fill="none" stroke="#444" strokeWidth="1.4" /></svg></div>
                  </div>
                </div>
              </div>
              <HRuler />
            </div>
          </div>
          {/* input row */}
          <div className="flex h-[28px] shrink-0 items-center">
            <span className="ml-[23px] w-[9px] text-[#8e8e8e]">l</span>
            <Disabled v="17,0" w="w-[80px]" />
            <span className="ml-[7px] w-[16px] text-[#333]">cm</span>
            <span className="ml-[35px] w-[9px] text-[#8e8e8e]">a</span>
            <Disabled v="90,0" w="w-[80px]" />
            <span className="ml-[8px] w-[6px] text-[#333]">°</span>
            <div className="ml-[26px] flex h-[22px] w-[140px] items-center border border-[#1c6fa8] bg-[#e5f1fb] pl-[3px] pr-[5px] text-[#222]">
              <span className="flex-1">dl,a (relativ polar)</span>
              <Chevron c="#444" />
            </div>
          </div>
          <Strip />
          <div className="mt-auto h-[4px] border-t border-[#d0d0d0] bg-[#f0f0f0]" />
        </div>
        <div className="w-[2px] shrink-0 bg-[#707070]" />
        <RightPanel />
      </div>
    </div>
  );
}
